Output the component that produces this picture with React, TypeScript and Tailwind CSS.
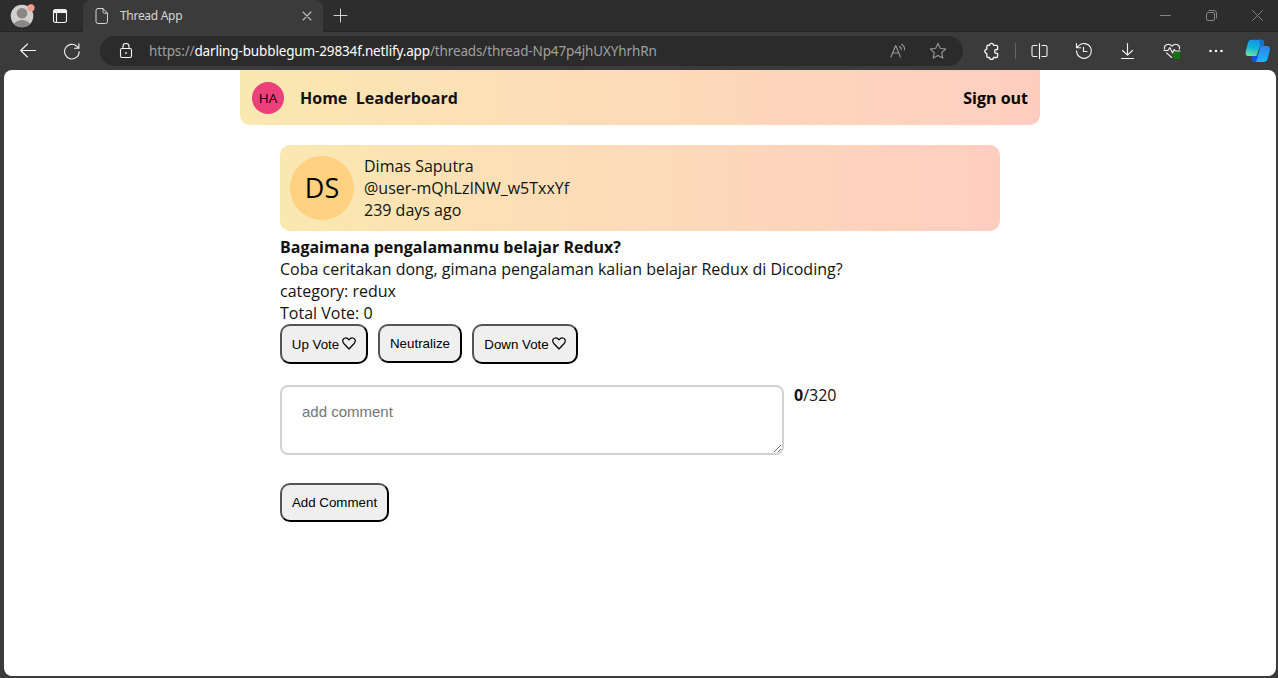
import React from 'react';

const stroke = {
  fill: 'none',
  stroke: 'currentColor',
  strokeWidth: 1.1,
  strokeLinecap: 'round' as const,
  strokeLinejoin: 'round' as const,
};

function TitleBar() {
  return (
    <div className="flex h-8 shrink-0 bg-[#2d2d2d] text-[#f2f2f2]">
      <div className="flex w-[83px] items-center border-b border-[#252525] pl-[10px]">
        <svg width="26" height="26" viewBox="0 0 26 26">
          <defs>
            <clipPath id="face">
              <circle cx="12" cy="13" r="11.3" />
            </clipPath>
          </defs>
          <circle cx="12" cy="13" r="11.3" fill="#d2d0ce" />
          <g clipPath="url(#face)" fill="#8a8886">
            <circle cx="12" cy="10.3" r="5.3" />
            <ellipse cx="12" cy="23" rx="8.5" ry="6" />
          </g>
          <circle cx="21" cy="4.8" r="3.6" fill="#ff9b92" />
        </svg>
        <svg className="ml-4" width="16" height="16" viewBox="0 0 16 16" {...stroke}>
          <rect x="1.5" y="1.5" width="13" height="13" rx="2.2" />
          <path d="M2 2.2h12v2.3H2z" fill="currentColor" />
          <path d="M4.500 4v10" />
        </svg>
      </div>
      <div className="flex w-[240px] items-center rounded-t-lg bg-[#3b3b3b] text-[#d6d6d6]">
        <svg className="ml-[11px]" width="16" height="18" viewBox="0 0 16 18" {...stroke} strokeWidth="1">
          <path d="M4 1.500h5l4.500 4.700v8.300a2 2 0 0 1-2 2H4a2 2 0 0 1-2-2v-11a2 2 0 0 1 2-2z" />
          <path d="M9 1.500v3.200a1.500 1.500 0 0 0 1.500 1.500h3" />
        </svg>
        <span className="ml-[10px] text-[12px] leading-4 tracking-[-0.300px]">Thread App</span>
        <svg className="mr-[11px] ml-auto text-[#bdbdbd]" width="10" height="10" viewBox="0 0 10 10" {...stroke}>
          <path d="M1 1l8 8M9 1l-8 8" />
        </svg>
      </div>
      <div className="flex flex-1 items-center border-b border-[#252525]">
        <svg className="ml-[10px] text-[#d0d0d0]" width="15" height="15" viewBox="0 0 15 15" {...stroke} strokeWidth="1">
          <path d="M7.500 1v13M1 7.500h13" />
        </svg>
        <div className="mr-[15px] ml-auto flex items-center gap-[35px] text-[#858585]">
          <svg width="11" height="11" viewBox="0 0 11 11" {...stroke} strokeWidth="1">
            <path d="M.5 5.500h10" />
          </svg>
          <svg width="11" height="11" viewBox="0 0 11 11" {...stroke} strokeWidth="1">
            <rect x="0.500" y="2.500" width="8" height="8" rx="1.500" />
            <path d="M3 .5h5a2.500 2.500 0 0 1 2.500 2.500v5" />
          </svg>
          <svg width="11" height="11" viewBox="0 0 11 11" {...stroke} strokeWidth="1">
            <path d="M.5.5l10 10M10.500.5l-10 10" />
          </svg>
        </div>
      </div>
    </div>
  );
}

function Toolbar() {
  return (
    <div className="flex h-[38px] shrink-0 items-center bg-[#3b3b3b] text-[#f5f5f5]">
      <svg className="ml-5" width="16" height="16" viewBox="0 0 16 16" {...stroke}>
        <path d="M15.500 7.500H.8M7.500 1L.700 7.500l6.800 6.500" />
      </svg>
      <svg className="ml-[28px]" width="16" height="17" viewBox="0 0 16 17" {...stroke}>
        <path d="M15.200 8.700A7.300 7.300 0 1 1 12.900 3.300L14.600 5" />
        <path d="M14.900.9v4.400h-4.400" />
      </svg>
      <div className="ml-5 flex h-[30px] w-[863px] items-center rounded-full bg-[#2b2b2b]">
        <svg className="ml-[19px]" width="14" height="16" viewBox="0 0 14 16" {...stroke}>
          <rect x="1.500" y="5.500" width="11" height="9" rx="1.500" />
          <path d="M4 5.500V3.500a3 3 0 0 1 6 0v2" />
          <circle cx="7" cy="10" r="0.900" fill="currentColor" stroke="none" />
        </svg>
        <div className="ml-4 w-[520px] text-[13.500px] leading-5 tracking-[-0.140px] whitespace-nowrap text-[#a0a0a0]">
          https://<span className="text-white">darling-bubblegum-29834f.netlify.app</span>/threads/thread-Np47p4jhUXYhrhRn
        </div>
        <svg className="ml-auto text-[#9a9a9a]" width="16" height="16" viewBox="0 0 16 16" {...stroke}>
          <path d="M1 14L5.700 2.500l4.700 11.500M2.700 10h6M9.500 3.500c1.300.8 1.800 1.700 1.800 3.300M11.500 1.300c2.200 1.300 3.200 3 3.100 5.500" />
        </svg>
        <svg className="mr-[16px] ml-[23px] text-[#9a9a9a]" width="18" height="18" viewBox="0 0 18 18" {...stroke}>
          <path d="M9 1.400l2.300 4.900 5.400.7-4 3.700 1.100 5.400L9 13.400l-4.800 2.700 1.100-5.400-4-3.700 5.400-.7z" />
        </svg>
      </div>
      <svg className="ml-5" width="17" height="18" viewBox="0 0 17 18" {...stroke} strokeWidth="1.300">
        <path d="M4.200 3.300h2.300a2 2 0 1 1 4 0h2.900a1.200 1.200 0 0 1 1.200 1.200v3h-1a1.900 1.900 0 0 0 0 3.800h1v3a1.200 1.200 0 0 1-1.200 1.200h-2.900a2 2 0 0 1-4 0H5A1.200 1.200 0 0 1 3.800 14.300v-3a2 2 0 1 1 0-4V4.500A1.200 1.200 0 0 1 5 3.300z" />
      </svg>
      <div className="ml-[15px] h-4 w-px bg-[#666]" />
      <svg className="ml-[15px]" width="17" height="18" viewBox="0 0 17 18" {...stroke}>
        <path d="M8.500 1.500v15M6 3.500H2.500A1.500 1.500 0 0 0 1 5v8a1.500 1.500 0 0 0 1.500 1.500H6M11 3.500h3.500A1.500 1.500 0 0 1 16 5v8a1.500 1.500 0 0 1-1.500 1.500H11" />
      </svg>
      <svg className="ml-[27px]" width="18" height="18" viewBox="0 0 18 18" {...stroke}>
        <path d="M1.600 8.900a7.400 7.400 0 1 0 2.200-5.200L1.700 5.500M1.500 1.500v4.200h4.200M8.500 5.300v4.200H12" />
      </svg>
      <svg className="ml-[27px]" width="16" height="18" viewBox="0 0 16 18" {...stroke}>
        <path d="M7.500 1.500v11.500M2.500 8.500L7.500 13.200l5-4.700M1.500 16.500h12" />
      </svg>
      <svg className="ml-[27px]" width="18" height="18" viewBox="0 0 18 18" {...stroke}>
        <path d="M1.600 7C.5 3 5.500.3 9 4.200c3.500-3.900 8.500-1.200 7.400 2.800M1 8.500h4l1.800-3L9.500 11l1.700-3.500 1 1.500H17M3.500 10.800L8.700 15.500" />
        <circle cx="13.500" cy="13.500" r="3.700" fill="#107c10" stroke="none" />
        <path d="M12 13.500l1.100 1.100 2-2" stroke="#075207" strokeWidth="0.900" />
      </svg>
      <svg className="ml-[27px]" width="16" height="4" viewBox="0 0 16 4" fill="currentColor">
        <circle cx="2.500" cy="2" r="1.300" />
        <circle cx="8" cy="2" r="1.300" />
        <circle cx="13.500" cy="2" r="1.300" />
      </svg>
      <svg className="ml-[21px] shrink-0" width="26" height="24" viewBox="0 0 26 24">
        <defs>
          <linearGradient id="leaf" x1=".6" y1="0" x2=".3" y2="1">
            <stop stopColor="#168fe3" />
            <stop offset=".5" stopColor="#10b4dc" />
            <stop offset="1" stopColor="#6de29a" />
          </linearGradient>
          <linearGradient id="wing" x1=".5" y1="0" x2=".5" y2="1">
            <stop stopColor="#2b83ed" />
            <stop offset="1" stopColor="#16b8fa" />
          </linearGradient>
        </defs>
        <path d="M7 .7h9.500c2 0 3 1.300 2.600 3.300l-.5 2.500h-3.300L11.500 17H3.500c-2.600 0-3.200-2-2.600-5L2.900 4C3.600 1.700 4.800.7 7 .7z" fill="url(#leaf)" />
        <path d="M14 .7h2.500c2 0 3 1.300 2.600 3.300l-.5 2.500h-3.300z" fill="#1672d0" />
        <path d="M16.800 7h5.200c2.600 0 3.300 2 2.700 5l-2 7.500c-.7 2.500-1.900 3.500-4.300 3.500H9.500c-1.600 0-2.600-1.200-2.600-3.500V17h3.600c1.800 0 2.600-1 3.100-3l1.300-5c.4-1.500.9-2 1.900-2z" fill="url(#wing)" />
        <path d="M6.900 17h3.600c1.800 0 2.600-1 3.100-3L11.800 21c-.4 1.500-1.200 2-2.300 2-1.600 0-2.600-1.200-2.600-3.500z" fill="#1550d8" />
      </svg>
    </div>
  );
}

function Heart() {
  return (
    <svg className="-mt-[2px] ml-[3px] shrink-0" width="14" height="13" viewBox="0 0 15 14" fill="none" stroke="#000" strokeWidth="1.300" strokeLinejoin="round">
      <path d="M7.500 12.900L2.200 7.300C-.6 4.200 1 1.500 3.500 1.100 5.300.8 6.500 1.700 7.500 3c1-1.300 2.200-2.200 4-1.900 2.500.4 4.100 3.100 1.300 6.200z" />
    </svg>
  );
}

const buttonStyle =
  'flex items-center justify-center rounded-[10px] border-2 border-t-[#555] border-r-black border-b-black border-l-[#555] bg-[#efefef] text-[13.333px] leading-[15px] text-black font-["Liberation_Sans",sans-serif]';

function Page() {
  return (
    <main className='flex-1 overflow-hidden rounded-lg bg-white font-["Open_Sans",sans-serif] text-[16px] leading-[22px] text-[#121212]'>
      <div className="ml-[236px] w-[800px]">
        <header className="flex h-[55px] items-center rounded-b-[10px] bg-linear-[to_right,#fae8b1,#ffcdc0] px-3 font-bold text-black">
          <div className="flex size-8 items-center justify-center rounded-full bg-[#ec407a] text-[13.500px] font-normal">HA</div>
          <nav className="ml-4 flex gap-[8.500px] text-[#121212]">
            <a>Home</a>
            <a>Leaderboard</a>
          </nav>
          <button className="ml-auto">Sign out</button>
        </header>
        <div className="mt-5 ml-10 w-[720px]">
          <section className="flex h-[86px] items-center gap-[10px] rounded-[10px] bg-linear-[to_right,#fae8b1,#ffcdc0] px-[10px]">
            <div className="flex size-16 items-center justify-center rounded-full bg-[#ffd180] pb-px text-[27px] text-black">DS</div>
            <div>
              <p>Dimas Saputra</p>
              <p>@user-mQhLzINW_w5TxxYf</p>
              <p>239 days ago</p>
            </div>
          </section>
          <h1 className="mt-[5px] font-bold">Bagaimana pengalamanmu belajar Redux?</h1>
          <p>Coba ceritakan dong, gimana pengalaman kalian belajar Redux di Dicoding?</p>
          <p>category: redux</p>
          <p>Total Vote: 0</p>
          <div className="flex items-start gap-[10px]">
            <button className={buttonStyle + ' h-10 w-[88px]'}>
              Up Vote
              <Heart />
            </button>
            <button className={buttonStyle + ' h-[39px] w-[84px]'}>Neutralize</button>
            <button className={buttonStyle + ' h-10 w-[106px]'}>
              Down Vote
              <Heart />
            </button>
          </div>
          <div className="mt-[21px] flex items-start gap-[10px]">
            <textarea
              placeholder="add comment"
              className='block h-[70px] w-[504px] resize rounded-lg border-2 border-[#d1d1d1] px-5 py-4 font-["Liberation_Sans",sans-serif] text-[15px] leading-[18px] placeholder:text-[#757575]'
            />
            <span className="-mt-px">
              <b>0</b>/320
            </span>
          </div>
          <button className={buttonStyle + ' mt-7 h-[39px] w-[109px]'}>Add Comment</button>
        </div>
      </div>
    </main>
  );
}

export default function App() {
  return (
    <div className='flex h-[678px] w-[1278px] flex-col overflow-hidden bg-[#3b3b3b] font-["Noto_Sans",sans-serif]'>
      <TitleBar />
      <Toolbar />
      <div className="flex min-h-0 flex-1 pr-[2px] pb-[2px] pl-1">
        <Page />
      </div>
    </div>
  );
}
